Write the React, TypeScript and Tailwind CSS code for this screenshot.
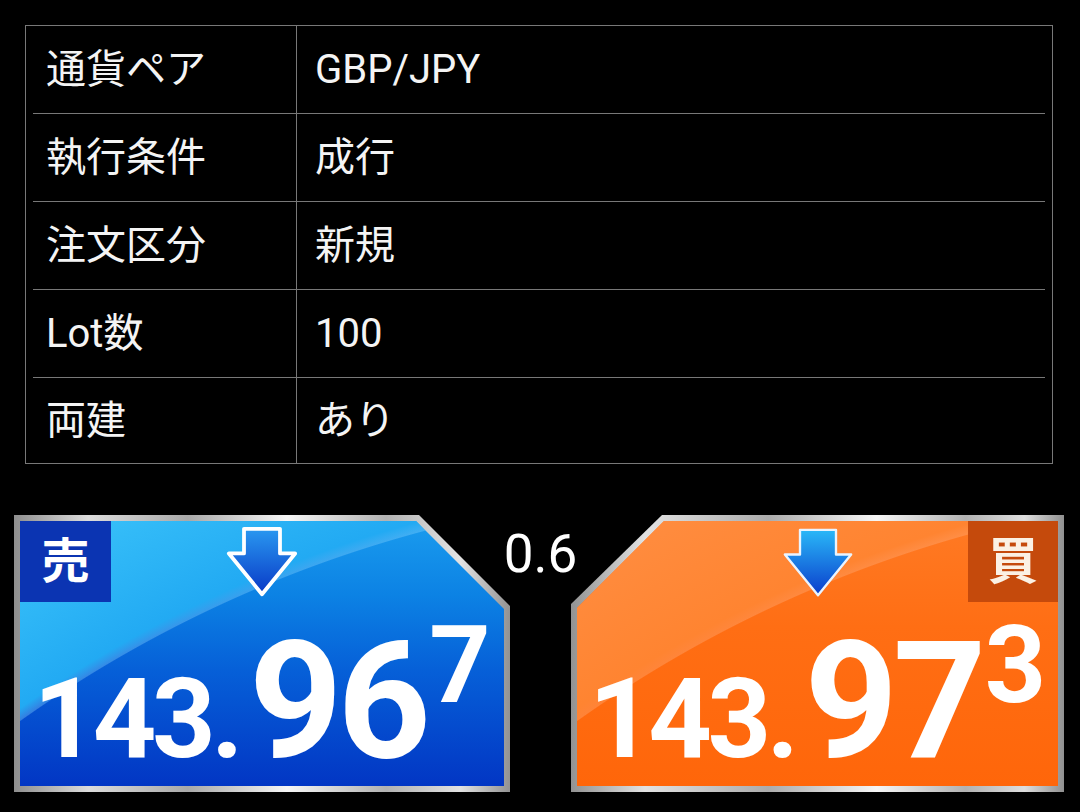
import React from 'react'

// Order confirmation rows
const rows = [
  { label: '通貨ペア', value: 'GBP/JPY' },
  { label: '執行条件', value: '成行' },
  { label: '注文区分', value: '新規' },
  { label: 'Lot数', value: '100' },
  { label: '両建', value: 'あり' },
]

const font = "font-['Roboto','Noto_Sans_CJK_JP',sans-serif]"

function DownArrow({ id, from, to, stroke, strokeWidth }: { id: string; from: string; to: string; stroke: string; strokeWidth: number }) {
  return (
    <svg width="72" height="72" viewBox="0 0 76 76" className="block">
      <defs>
        <linearGradient id={id} x1="0" y1="0" x2="0" y2="1">
          <stop offset="0%" stopColor={from} />
          <stop offset="100%" stopColor={to} />
        </linearGradient>
      </defs>
      <path
        d="M19 3 H57 V29 H73 L38 72 L3 29 H19 Z"
        fill={`url(#${id})`}
        stroke={stroke}
        strokeWidth={strokeWidth}
        strokeLinejoin="round"
      />
    </svg>
  )
}

function Price({ small, big, sup }: { small: string; big: string; sup: string }) {
  return (
    <div className={`mt-[17px] flex justify-center items-start text-white font-bold ${font}`}>
      <span className="mt-[44px] text-[111px] leading-none tracking-[-0.04em]">{small}</span>
      <span className="ml-[10px] text-[163px] leading-none tracking-[-0.03em]">{big}</span>
      <span className="-mt-2 ml-[3px] text-[107px] leading-none">{sup}</span>
    </div>
  )
}

export default function App() {
  return (
    <div className={`w-[1080px] min-h-[812px] bg-black text-white overflow-hidden ${font}`}>
      {/* Order summary table */}
      <div className="mt-[25px] ml-[25px] w-[1028px] border border-[#787878]">
        {rows.map((r, i) => (
          <div key={r.label}>
            {i > 0 && <div className="mx-[7px] h-px bg-[#787878]" />}
            <div className={`flex ${i === rows.length - 1 ? 'h-[85px]' : 'h-[87px]'}`}>
              <div className="w-[271px] shrink-0 border-r border-[#787878] pl-5 flex items-center text-[40px] leading-none text-[#f4f4f4]">
                {r.label}
              </div>
              <div className="pl-[18px] flex items-center text-[40px] leading-none text-[#f4f4f4]">{r.value}</div>
            </div>
          </div>
        ))}
      </div>

      {/* Sell / Buy panels */}
      <div className="mt-[51px] pl-[14px] flex">
        {/* Sell */}
        <div className="w-[496px] h-[277px] shrink-0 p-[6px] bg-[linear-gradient(90deg,#8e8e8e_0%,#dcdcdc_15%,#a9a9a9_35%,#f6f6f6_55%,#b2b2b2_75%,#e2e2e2_90%,#929292_100%)] [clip-path:polygon(0_0,405px_0,100%_91px,100%_100%,0_100%)]">
          <div className="h-full flex flex-col [clip-path:polygon(0_0,396px_0,100%_88px,100%_100%,0_100%)] bg-[radial-gradient(circle_at_728px_1223px,transparent_1255px,rgba(140,215,255,0.35)_1256px,#22aaf3_1266px,#3ec6fa_1430px),linear-gradient(180deg,#1a9cee_0%,#0c82e4_28%,#0660d8_56%,#0236c4_100%)]">
            <div className="grid grid-cols-[1fr_auto_1fr] h-[82px]">
              <div className="w-[91px] h-[81px] bg-[#0b34b2] flex items-center justify-center text-[48px] font-bold leading-none">
                売
              </div>
              <div className="mt-[5px]">
                <DownArrow id="sellArrow" from="#2a98f0" to="#0838c6" stroke="#ffffff" strokeWidth={4} />
              </div>
              <div />
            </div>
            <Price small="143." big="96" sup="7" />
          </div>
        </div>

        {/* Spread */}
        <div className="w-[61px] shrink-0 flex justify-center pt-[13px]">
          <span className="text-[53px] leading-none whitespace-nowrap font-normal">0.6</span>
        </div>

        {/* Buy */}
        <div className="w-[493px] h-[277px] shrink-0 p-[6px] bg-[linear-gradient(90deg,#929292_0%,#e2e2e2_15%,#acacac_40%,#f6f6f6_62%,#b2b2b2_80%,#dedede_92%,#909090_100%)] [clip-path:polygon(91px_0,100%_0,100%_100%,0_100%,0_89px)]">
          <div className="h-full flex flex-col [clip-path:polygon(87px_0,100%_0,100%_100%,0_100%,0_87px)] bg-[radial-gradient(circle_at_728px_1223px,transparent_1255px,rgba(255,190,150,0.3)_1256px,#ff8431_1266px,#ff8f44_1430px),linear-gradient(180deg,#ff7a24_0%,#ff6e14_40%,#ff660a_100%)]">
            <div className="grid grid-cols-[1fr_auto_1fr] h-[82px]">
              <div />
              <div className="mt-[6px]">
                <DownArrow id="buyArrow" from="#2ab8f8" to="#0a3ccb" stroke="#eaf4ff" strokeWidth={2.5} />
              </div>
              <div className="flex justify-end">
                <div className="w-[90px] h-[81px] bg-[#c54a0c] flex items-center justify-center text-[50px] font-bold leading-none text-[#fbf1e4]">
                  買
                </div>
              </div>
            </div>
            <Price small="143." big="97" sup="3" />
          </div>
        </div>
      </div>
    </div>
  )
}
